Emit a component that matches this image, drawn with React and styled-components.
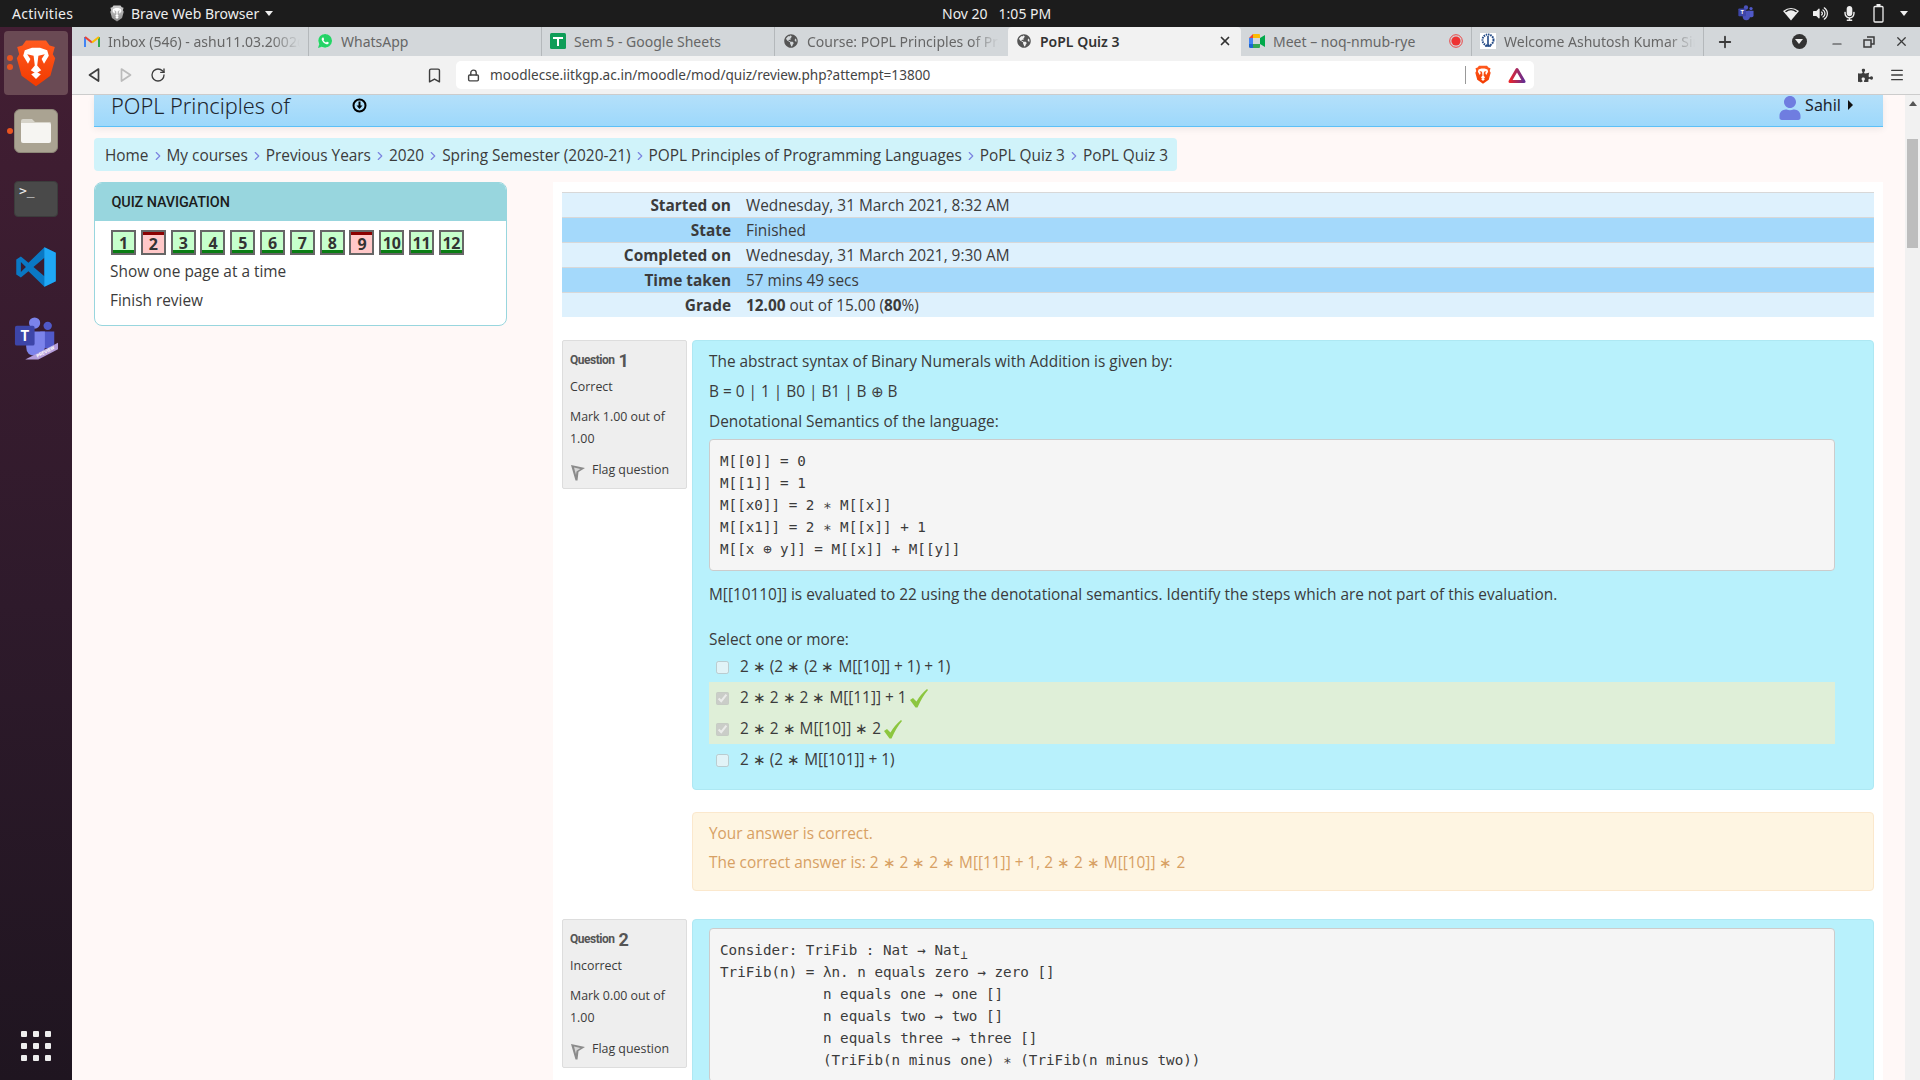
import React from 'react';
import styled, { createGlobalStyle } from 'styled-components';
import { FaGlobeAmericas, FaUser, FaPuzzlePiece, FaVolumeUp, FaMicrophone } from 'react-icons/fa';
import { IoLogoWhatsapp } from 'react-icons/io';
import { Lock, Bookmark, RotateCw, ChevronRight, Plus, X, Minus, Menu } from 'lucide-react';

const Global = createGlobalStyle`
  html, body { margin: 0; padding: 0; height: 100%; overflow: hidden; }
  #root { height: 100%; }
  * { box-sizing: border-box; }
  body { font-family: "Open Sans", "Noto Sans", sans-serif; color: #3b3b3b; }
`;

const Shell = styled.div`
  width: 1920px; height: 1080px; overflow: hidden;
  display: grid; grid-template-columns: 72px 1fr; grid-template-rows: 27px 1fr;
`;

/* ---------- GNOME top bar ---------- */
const TopBar = styled.header`
  grid-column: 1 / -1; background: #1c1c1c; color: #eee;
  display: flex; align-items: center; font: 14px "Noto Sans", sans-serif;
`;
const Activities = styled.span` margin-left: 12px; width: 98px; letter-spacing: .3px; `;
const AppName = styled.span` display: flex; align-items: center; gap: 7px; width: 832px; `;
const TriDown = styled.i`
  display: inline-block; width: 0; height: 0; margin-left: ${p => p.$ml || 0}px;
  border-left: 4px solid transparent; border-right: 4px solid transparent; border-top: 5px solid #eee;
`;
const Clock = styled.span` display: flex; gap: 11px; `;
const Tray = styled.div` margin-left: auto; display: flex; align-items: center; gap: 14px; padding-right: 12px; color: #eee; font-size: 15px; `;
const TraySlot = styled.span` display: flex; margin-left: ${p => p.$ml || 0}px; `;

/* ---------- dock ---------- */
const Dock = styled.nav`
  background: linear-gradient(#431e33, #2e1a2b 55%, #1f1520);
  display: flex; flex-direction: column; align-items: center; padding-top: 4px;
`;
const DockSlot = styled.div`
  position: relative; display: flex; align-items: center; justify-content: center;
  width: ${p => p.$active ? '64px' : '44px'}; height: ${p => p.$h}px; margin-top: ${p => p.$top || 0}px;
  border-radius: 4px; background: ${p => p.$active ? '#6a4a54' : 'transparent'};
`;
const RunDot = styled.i`
  position: absolute; left: ${p => p.$left}px; top: ${p => p.$t}px; width: 6px; height: 6px; border-radius: 50%; background: #e95420;
`;
const FolderTile = styled.div`
  width: 44px; height: 44px; border-radius: 6px; background: #aaa392; border: 1px solid #8d8778;
  display: flex; align-items: center; justify-content: center;
`;
const TermTile = styled.div`
  width: 44px; height: 36px; border-radius: 4px; background: #494949; border: 1px solid #3c3c3c;
  color: #eee; font: 13px/16px "DejaVu Sans Mono", monospace; padding: 1px 4px;
`;
const AppGrid = styled.div`
  margin-top: auto; margin-bottom: 19px; display: grid; grid-template-columns: repeat(3, 6px); gap: 6px;
  & i { width: 6px; height: 6px; border-radius: 1px; background: #eee; display: block; }
`;

/* ---------- browser chrome ---------- */
const Main = styled.div` display: flex; flex-direction: column; min-width: 0; overflow: hidden; `;
const TabBar = styled.div` height: 29px; background: #d3d7da; display: flex; padding-left: 4px; flex: none; `;
const Tab = styled.div`
  width: ${p => p.$w || 233}px; flex: none; height: 29px; display: flex; align-items: center; padding: 0 8px 1px 8px; gap: 8px;
  font: ${p => p.$active ? 600 : 400} 14px "Noto Sans", sans-serif; color: ${p => p.$active ? '#333' : '#666'};
  background: ${p => p.$active ? '#f2f2f2' : 'transparent'};
  border-radius: ${p => p.$active ? '4px 4px 0 0' : 0};
  border-right: 1px solid ${p => p.$noSep ? 'transparent' : '#b4b8bb'};
`;
const TabTitle = styled.span`
  flex: 1; white-space: nowrap; overflow: hidden;
  ${p => p.$fade ? 'mask-image: linear-gradient(90deg,#000 85%,transparent);' : ''}
`;
const IconBox = styled.span` width: 16px; height: 16px; flex: none; display: flex; align-items: center; justify-content: center; `;
const WhatsWrap = styled(IconBox)` background: radial-gradient(circle, #fff 60%, transparent 62%); color: #25d366; font-size: 18px; `;
const WinControls = styled.div` display: flex; align-items: center; margin-left: 12px; color: #3a3a3a; `;
const WinBtn = styled.span` width: 32px; display: flex; justify-content: center; margin-left: ${p => p.$ml || 0}px; `;
const RoundDown = styled.span`
  width: 15px; height: 15px; border-radius: 50%; background: #333; display: flex; align-items: center; justify-content: center;
`;
const Toolbar = styled.div`
  height: 39px; flex: none; background: #f2f2f2; border-bottom: 1px solid #ccc; display: flex; align-items: center; color: #3d3d3d;
`;
const NavBtn = styled.span` width: 32px; display: flex; justify-content: center; color: ${p => p.$off ? '#bbb' : '#3d3d3d'}; margin-left: ${p => p.$ml || 0}px; `;
const Address = styled.div`
  margin-left: 6px; width: 1078px; height: 28px; background: #fff; border-radius: 5px; display: flex; align-items: center; padding-left: 11px;
  font: 13.6px "Noto Sans", sans-serif; color: #444;
`;
const Url = styled.span` margin-left: 10px; flex: 1; padding-bottom: 1px; `;
const UrlSep = styled.i` width: 1px; height: 18px; background: #999; `;
const AddrIcon = styled.span` display: flex; width: 34px; justify-content: center; `;

/* ---------- page ---------- */
const Viewport = styled.div` flex: 1; min-height: 0; display: flex; overflow: hidden; background: #fff8f7; `;
const Content = styled.main` flex: 1; min-width: 0; padding: 0 22px; `;
const Scrollbar = styled.div` width: 15px; flex: none; background: #f1f1f1; padding-top: 6px; display: flex; flex-direction: column; align-items: center; `;
const ScrollUp = styled.i` width: 0; height: 0; border-left: 4px solid transparent; border-right: 4px solid transparent; border-bottom: 5px solid #555; `;
const ScrollThumb = styled.i` display: block; width: 11px; height: 109px; margin-top: 33px; background: #bdbdbd; `;

const SiteHeader = styled.div`
  height: 32px; background: linear-gradient(#b4e0fa, #9dd8fb); border-bottom: 1px solid #5cc0f7;
  box-shadow: 0 2px 7px rgba(0,0,0,.07); display: flex; align-items: center; padding: 0 8px 11px 17px; color: #1d2630; position: relative;
`;
const SiteTitle = styled.span` font: 300 21.7px "Noto Sans", sans-serif; width: 241px; white-space: nowrap; `;
const UserMenu = styled.div` margin-left: auto; display: flex; align-items: center; gap: 3px; font: 16px "Noto Sans", sans-serif; padding-right: 22px; `;
const UserIcon = styled.span` color: #6f7de0; font-size: 24px; display: flex; margin-top: 5px; `;
const CaretRight = styled.i` width: 0; height: 0; margin-left: 4px; border-top: 5px solid transparent; border-bottom: 5px solid transparent; border-left: 5px solid #111; `;

const Crumbs = styled.ol`
  list-style: none; margin: 11px 0 0; padding: 2px 9px 0 11px; height: 33px; display: inline-flex; align-items: center; gap: 2px;
  background: #d0f3fa; border-radius: 4px; font-size: 15.4px; white-space: nowrap; vertical-align: top;
`;
const CrumbItem = styled.li` display: flex; align-items: center; gap: 2px; color: #3b3b3b; & svg { color: #7b83e0; } `;

const Columns = styled.div` display: flex; gap: 46px; margin-top: 11px; align-items: flex-start; `;
const NavCard = styled.aside` width: 413px; flex: none; background: #fff; border: 1px solid #98d6de; border-radius: 8px; overflow: hidden; `;
const NavHead = styled.h2`
  margin: 0; height: 38px; background: #98d6de; padding-left: 16.5px; display: flex; align-items: center;
  font: 500 14.4px Roboto, sans-serif; color: #1c1c1c; letter-spacing: -.1px;
`;
const NavBody = styled.div` padding: 9px 15px 12px; `;
const NavBtns = styled.div` display: flex; gap: 4.8px; margin-left: 1px; `;
const QBtn = styled.span`
  width: 25px; height: 25px; border: 2px solid #666; display: flex; align-items: center; justify-content: center;
  font-weight: 700; font-size: 16px; color: #333; letter-spacing: -.3px; padding-top: ${p => p.$ok ? 0 : 2}px;
  background: ${p => p.$ok ? '#c6ffcc' : '#ffc8c8'};
  box-shadow: inset 0 ${p => p.$ok ? '-3px' : '3px'} 0 ${p => p.$ok ? '#0a7d14' : '#8b0000'};
`;
const NavLink = styled.div` font-size: 15.4px; line-height: 24px; margin-top: ${p => p.$top}px; `;

const Panel = styled.section` flex: 1; min-width: 0; background: #fff; padding: 10px 9px 0; height: 900px; `;
const SumTable = styled.table` width: 100%; border-collapse: collapse; font-size: 15.4px; line-height: 22px; `;
const SumRow = styled.tr` background: ${p => p.$alt ? '#a4d9fb' : '#def1fd'}; border-top: 1px solid #d8d8d8; `;
const SumHead = styled.th` width: 169px; padding: 2px 0 0; text-align: right; font-weight: 700; white-space: nowrap; `;
const SumCell = styled.td` padding: 2px 0 0 15px; `;

const Question = styled.article` display: flex; gap: 5px; margin-top: ${p => p.$top}px; align-items: flex-start; `;
const Info = styled.div` width: 125px; flex: none; background: #eee; border: 1px solid #ddd; border-radius: 2px; padding: 7px 7px 7px; font-size: 12.4px; `;
const QLabel = styled.h3`
  margin: 0; height: 24px; display: flex; align-items: center; gap: 4px; font: 700 12px Roboto, sans-serif; letter-spacing: -.5px; color: #555;
  & b { font-size: 18px; font-weight: 700; letter-spacing: 0; }
`;
const InfoLine = styled.div` line-height: 22px; margin-top: ${p => p.$top}px; `;
const FlagLine = styled.div` display: flex; align-items: flex-start; gap: 7px; line-height: 22px; margin-top: 9px; padding-left: 1px; & svg { margin-top: 5px; } `;
const Body = styled.div` flex: 1; min-width: 0; `;
const Formulation = styled.div` background: #b8f1fc; border-radius: 4px; border: 1px solid #aee8f3; padding: 9px 38px 14px 16px; font-size: 15.4px; line-height: 24px; `;
const Para = styled.p` margin: ${p => p.$top || 0}px 0 0; `;
const Code = styled.pre`
  margin: ${p => p.$top ?? 5}px 0 0; background: #f5f5f5; border: 1px solid #ccc; border-radius: 4px; padding: 10px;
  font: 14.25px/22px "DejaVu Sans Mono", monospace; color: #3b3b3b; overflow: hidden;
  & sub { font-size: 12px; line-height: 0; }
`;
const Options = styled.div` margin-top: -1px; `;
const Option = styled.label`
  display: flex; align-items: center; height: 31px; padding-left: 7px; gap: 11px;
  background: ${p => p.$right ? '#dfefd8' : 'transparent'};
  & input { margin: 2px 0 0; width: 13px; height: 13px; flex: none; }
`;
const Feedback = styled.div`
  margin-top: 22px; background: #fef5e2; border: 1px solid #fbe8cd; border-radius: 4px; padding: 9px 16px 15px; color: #d7a064; font-size: 15.4px; line-height: 24px;
`;
const Tick = styled.svg` margin: 0 0 -5px 3px; `;

const TickMark = () => (
  <Tick width="18" height="19" viewBox="0 0 18 19"><path fill="#8cc63f" d="M0 11L3 9L6.5 12.5Q10 6 17 0L18 1Q12 8 7.5 18.5L5.5 18.5Z" /></Tick>
);
const Shield = ({ size = 40, mono }) => (
  <svg width={size} height={size * 1.2} viewBox="0 0 100 120">
    <defs><linearGradient id={mono ? 'sm' : 'sc'} x1="0" y1="0" x2="0" y2="1">
      <stop offset="0" stopColor={mono ? '#cfcfcf' : '#ff5a1f'} /><stop offset="1" stopColor={mono ? '#8a8a8a' : '#f23a00'} />
    </linearGradient></defs>
    <path fill={`url(#${mono ? 'sm' : 'sc'})`} d="M25 4H75L84 16L97 20L92 38L98 48L86 92L50 118L14 92L2 48L8 38L3 20L16 16Z" />
    <path fill="#fff" d="M22 28L40 22H60L78 28L82 42L70 62L64 50L72 38L56 42L53 66L63 78L50 86L37 78L47 66L44 42L28 38L36 50L30 62L18 42Z" />
    <path fill="#fff" d="M38 88L50 82L62 88L50 100Z" />
  </svg>
);
const Gmail = () => (
  <svg width="16" height="13" viewBox="0 0 16 13" fill="none">
    <path d="M1 12V2" stroke="#4285f4" strokeWidth="2" /><path d="M15 12V2" stroke="#34a853" strokeWidth="2" />
    <path d="M1 2L8 7.5" stroke="#ea4335" strokeWidth="2.2" /><path d="M15 2L8 7.5" stroke="#fbbc04" strokeWidth="2.2" />
  </svg>
);
const Sheets = () => (
  <svg width="16" height="16" viewBox="0 0 16 16"><rect width="16" height="16" rx="1.5" fill="#0f9d58" /><path d="M3 5H13M8 5V13" stroke="#fff" strokeWidth="2" /></svg>
);
const MeetIcon = () => (
  <svg width="16" height="14" viewBox="0 0 16 14">
    <path d="M0 4L4 0V4Z" fill="#ea4335" /><rect x="0" y="4" width="4" height="6" fill="#4285f4" /><path d="M0 10H4V14H1.5Q0 14 0 12.5Z" fill="#1967d2" />
    <path d="M4 0H10Q11 0 11 1V4H4Z" fill="#fbbc04" /><path d="M4 10H11V13Q11 14 10 14H4Z" fill="#34a853" /><path d="M11 4V10L16 13V1Z" fill="#00a94b" />
  </svg>
);
const RecDot = () => (
  <svg width="14" height="14" viewBox="0 0 14 14" style={{ flex: 'none' }}><circle cx="7" cy="7" r="6.3" fill="none" stroke="#e33" strokeWidth=".9" /><circle cx="7" cy="7" r="4.6" fill="#e33" /></svg>
);
const IitLogo = () => (
  <svg width="16" height="16" viewBox="0 0 16 16"><rect width="16" height="16" fill="#fff" /><circle cx="8" cy="7" r="5.5" fill="none" stroke="#234a86" strokeWidth="2" strokeDasharray="1.5 .8" /><path d="M8 3V13M5 13H11" stroke="#234a86" strokeWidth="1.6" /></svg>
);
const Tri = ({ flip, color = '#3d3d3d' }) => (
  <svg width="14" height="16" viewBox="0 0 14 16" fill="none" style={{ transform: flip ? 'scaleX(-1)' : 'none' }}><path d="M11.5 2L2.5 8L11.5 14Z" stroke={color} strokeWidth="1.7" strokeLinejoin="round" /></svg>
);
const WifiFan = () => (
  <svg width="16" height="14" viewBox="0 0 16 14"><path fill="#eee" d="M8 13.5L0 4Q8 -2 16 4Z" /><path fill="#1c1c1c" d="M2 4.2Q8 0 14 4.2L13 5.2Q8 1.4 3 5.2Z" /></svg>
);
const BatIcon = () => <svg width="11" height="19" viewBox="0 0 11 19" fill="none"><path d="M3.5 1H7.5" stroke="#eee" strokeWidth="2" /><rect x="1" y="2.5" width="9" height="15.5" rx="1" stroke="#eee" strokeWidth="1.3" /></svg>;
const VsCode = () => (
  <svg width="42" height="42" viewBox="0 0 100 100">
    <path fillRule="evenodd" fill="#0a78c4" d="M70 3L97 16V84L70 97L32 60L14 75L3 68V32L14 25L32 40ZM70 28L44 50L70 72ZM14 38V62L26 50Z" />
    <path fill="#1fa7f5" d="M70 3L97 16V84L70 97V72L70 28Z" />
  </svg>
);
const Teams = ({ small }) => (
  <svg width={small ? 17 : 47} height={small ? 17 : 45} viewBox="0 0 47 45">
    <circle cx="22" cy="6" r="6" fill={small ? '#4b53bc' : '#7b83eb'} /><circle cx="36" cy="9" r="4.5" fill="#5059c9" />
    <path d="M28 15H43V28Q43 33 38 33H28Z" fill="#5059c9" /><path d="M13 15H33V31Q33 41 23 41T13 31Z" fill={small ? '#4b53bc' : '#7b83eb'} />
    <rect x="1" y="9" width="21" height="21" rx="2" fill="#3d45a8" />
    <text x="11.5" y="25" textAnchor="middle" fontFamily="Roboto, sans-serif" fontWeight="700" fontSize="15" fill="#fff">T</text>
    {!small && <path d="M12 45L47 27V34L26 45Z" fill="#b39ddb" />}
    {!small && <text x="25" y="43" transform="rotate(-27 25 43)" fontFamily="Roboto, sans-serif" fontWeight="700" fontSize="5" fill="#fff">PREVIEW</text>}
  </svg>
);
const DownloadRing = () => (
  <svg width="15" height="15" viewBox="0 0 15 15" fill="none"><circle cx="7.5" cy="7.5" r="6" stroke="#000" strokeWidth="2" /><path d="M7.5 3.5V8" stroke="#000" strokeWidth="2" /><path d="M4.5 7.5H10.5L7.5 11Z" fill="#000" /></svg>
);
const FlagIcon = () => (
  <svg width="14" height="17" viewBox="0 0 14 17" style={{ flex: 'none' }}><path d="M0 1L14 4L7.5 8L6.5 16.5L4.5 16.5Z" fill="#8b8b8b" /><path d="M3 3.5L9.5 5L5.5 7.5L5 11Z" fill="#d5d5d5" /></svg>
);
const BatTriangle = () => (
  <svg width="18" height="16" viewBox="0 0 18 16" fill="none"><path d="M9 2.5L16 14.5H2Z" stroke="url(#bat)" strokeWidth="3" strokeLinejoin="round" />
    <defs><linearGradient id="bat" x1="0" y1="0" x2="1" y2="0"><stop offset="0" stopColor="#e8262d" /><stop offset="1" stopColor="#662d91" /></linearGradient></defs></svg>
);

const OPTIONS = [
  { text: '2 ∗ (2 ∗ (2 ∗ M[[10]] + 1) + 1)' },
  { text: '2 ∗ 2 ∗ 2 ∗ M[[11]] + 1', right: true },
  { text: '2 ∗ 2 ∗ M[[10]] ∗ 2', right: true },
  { text: '2 ∗ (2 ∗ M[[101]] + 1)' },
];
const CRUMBS = ['Home', 'My courses', 'Previous Years', '2020', 'Spring Semester (2020-21)', 'POPL Principles of Programming Languages', 'PoPL Quiz 3', 'PoPL Quiz 3'];
const SUMMARY = [
  ['Started on', 'Wednesday, 31 March 2021, 8:32 AM'],
  ['State', 'Finished'],
  ['Completed on', 'Wednesday, 31 March 2021, 9:30 AM'],
  ['Time taken', '57 mins 49 secs'],
  ['Grade', <><b>12.00</b> out of 15.00 (<b>80</b>%)</>],
];

const QInfo = ({ n, status, mark }) => (
  <Info>
    <QLabel>Question <b>{n}</b></QLabel>
    <InfoLine $top={4}>{status}</InfoLine>
    <InfoLine $top={8}>Mark {mark} out of 1.00</InfoLine>
    <FlagLine><FlagIcon />Flag question</FlagLine>
  </Info>
);

export default function App() {
  return (
    <>
      <Global />
      <Shell>
        <TopBar>
          <Activities>Activities</Activities>
          <AppName><Shield size={14} mono />Brave Web Browser<TriDown $ml={-1} /></AppName>
          <Clock><span>Nov 20</span><span>1:05 PM</span></Clock>
          <Tray>
            <Teams small />
            <TraySlot $ml={14}><WifiFan /></TraySlot>
            <TraySlot><FaVolumeUp size={15} /></TraySlot>
            <TraySlot><FaMicrophone size={15} /></TraySlot>
            <TraySlot $ml={2}><BatIcon /></TraySlot>
            <TraySlot $ml={2}><TriDown /></TraySlot>
          </Tray>
        </TopBar>
        <Dock>
          <DockSlot $active $h={64}>
            <RunDot $left={3} $t={24} /><RunDot $left={3} $t={33} />
            <Shield size={40} />
          </DockSlot>
          <DockSlot $h={44} $top={14}>
            <RunDot $left={-7} $t={19} />
            <FolderTile>
              <svg width="32" height="26" viewBox="0 0 32 26"><path d="M1 3Q1 1 3 1H12L15 4H30Q31 4 31 6V8H1Z" fill="#d6d3c9" /><path d="M1 5H29Q31 5 31 7V23Q31 25 29 25H3Q1 25 1 23Z" fill="#f6f5f2" /></svg>
            </FolderTile>
          </DockSlot>
          <DockSlot $h={36} $top={28}><TermTile>&gt;_</TermTile></DockSlot>
          <DockSlot $h={42} $top={29}><VsCode /></DockSlot>
          <DockSlot $h={45} $top={28}><Teams /></DockSlot>
          <AppGrid>{Array.from({ length: 9 }, (_, i) => <i key={i} />)}</AppGrid>
        </Dock>
        <Main>
          <TabBar>
            <Tab><IconBox><Gmail /></IconBox><TabTitle $fade>Inbox (546) - ashu11.03.2002@gmail.com</TabTitle></Tab>
            <Tab><WhatsWrap><IoLogoWhatsapp /></WhatsWrap><TabTitle>WhatsApp</TabTitle></Tab>
            <Tab><IconBox><Sheets /></IconBox><TabTitle>Sem 5 - Google Sheets</TabTitle></Tab>
            <Tab $noSep><IconBox><FaGlobeAmericas size={14} color="#555" /></IconBox><TabTitle $fade>Course: POPL Principles of Programming</TabTitle></Tab>
            <Tab $active $noSep><IconBox><FaGlobeAmericas size={14} color="#555" /></IconBox><TabTitle>PoPL Quiz 3</TabTitle><X size={14} strokeWidth={3} color="#333" /></Tab>
            <Tab $w={231}><IconBox><MeetIcon /></IconBox><TabTitle>Meet – noq-nmub-rye</TabTitle><RecDot /></Tab>
            <Tab $w={232}><IconBox><IitLogo /></IconBox><TabTitle $fade>Welcome Ashutosh Kumar Singh</TabTitle></Tab>
            <WinControls>
              <Plus size={18} strokeWidth={2.4} />
              <WinBtn $ml={49}><RoundDown><TriDown /></RoundDown></WinBtn>
              <WinBtn $ml={6}><Minus size={14} strokeWidth={2} style={{ marginTop: 5 }} /></WinBtn>
              <WinBtn><svg width="12" height="12" viewBox="0 0 12 12" fill="none" stroke="#3a3a3a" strokeWidth="1.5"><path d="M4 1H11V8H8M1 4H8V11H1Z" /></svg></WinBtn>
              <WinBtn><X size={15} strokeWidth={2} /></WinBtn>
            </WinControls>
          </TabBar>
          <Toolbar>
            <NavBtn $ml={6}><Tri /></NavBtn>
            <NavBtn $off><Tri flip color="#bbb" /></NavBtn>
            <NavBtn><RotateCw size={16} strokeWidth={2} /></NavBtn>
            <NavBtn $ml={244}><Bookmark size={17} strokeWidth={2} /></NavBtn>
            <Address>
              <Lock size={13} strokeWidth={2.6} color="#444" />
              <Url>moodlecse.iitkgp.ac.in/moodle/mod/quiz/review.php?attempt=13800</Url>
              <UrlSep />
              <AddrIcon><Shield size={16} /></AddrIcon>
              <AddrIcon><BatTriangle /></AddrIcon>
            </Address>
            <NavBtn $ml={315}><FaPuzzlePiece size={15} /></NavBtn>
            <NavBtn $ml={0}><Menu size={16} strokeWidth={2} /></NavBtn>
          </Toolbar>
          <Viewport>
            <Content>
              <SiteHeader>
                <SiteTitle>POPL Principles of</SiteTitle>
                <DownloadRing />
                <UserMenu><UserIcon><FaUser /></UserIcon>Sahil<CaretRight /></UserMenu>
              </SiteHeader>
              <Crumbs>
                {CRUMBS.map((c, i) => (
                  <CrumbItem key={i}>{c}{i < CRUMBS.length - 1 && <ChevronRight size={14} strokeWidth={2} />}</CrumbItem>
                ))}
              </Crumbs>
              <Columns>
                <NavCard>
                  <NavHead>QUIZ NAVIGATION</NavHead>
                  <NavBody>
                    <NavBtns>
                      {[1, 2, 3, 4, 5, 6, 7, 8, 9, 10, 11, 12].map(n => <QBtn key={n} $ok={n !== 2 && n !== 9}>{n}</QBtn>)}
                    </NavBtns>
                    <NavLink $top={5}>Show one page at a time</NavLink>
                    <NavLink $top={5}>Finish review</NavLink>
                  </NavBody>
                </NavCard>
                <Panel>
                  <SumTable>
                    <tbody>
                      {SUMMARY.map(([k, v], i) => (
                        <SumRow key={k} $alt={i % 2 === 1}><SumHead>{k}</SumHead><SumCell>{v}</SumCell></SumRow>
                      ))}
                    </tbody>
                  </SumTable>
                  <Question $top={23}>
                    <QInfo n={1} status="Correct" mark="1.00" />
                    <Body>
                      <Formulation>
                        <Para>The abstract syntax of Binary Numerals with Addition is given by:</Para>
                        <Para $top={6}>B = 0 | 1 | B0 | B1 | B ⊕ B</Para>
                        <Para $top={6}>Denotational Semantics of the language:</Para>
                        <Code>{`M[[0]] = 0
M[[1]] = 1
M[[x0]] = 2 ∗ M[[x]]
M[[x1]] = 2 ∗ M[[x]] + 1
M[[x ⊕ y]] = M[[x]] + M[[y]]`}</Code>
                        <Para $top={12}>M[[10110]] is evaluated to 22 using the denotational semantics. Identify the steps which are not part of this evaluation.</Para>
                        <Para $top={21}>Select one or more:</Para>
                        <Options>
                          {OPTIONS.map(o => (
                            <Option key={o.text} $right={o.right}>
                              <input type="checkbox" disabled checked={!!o.right} readOnly />
                              <span>{o.text}{o.right && <TickMark />}</span>
                            </Option>
                          ))}
                        </Options>
                      </Formulation>
                      <Feedback>
                        <Para>Your answer is correct.</Para>
                        <Para $top={5}>The correct answer is: 2 ∗ 2 ∗ 2 ∗ M[[11]] + 1, 2 ∗ 2 ∗ M[[10]] ∗ 2</Para>
                      </Feedback>
                    </Body>
                  </Question>
                  <Question $top={28}>
                    <QInfo n={2} status="Incorrect" mark="0.00" />
                    <Body>
                      <Formulation>
                        <Code $top={-1}>{`Consider: TriFib : Nat → Nat`}<sub>⊥</sub>{`
TriFib(n) = λn. n equals zero → zero []
            n equals one → one []
            n equals two → two []
            n equals three → three []
            (TriFib(n minus one) ∗ (TriFib(n minus two))`}</Code>
                      </Formulation>
                    </Body>
                  </Question>
                </Panel>
              </Columns>
            </Content>
            <Scrollbar><ScrollUp /><ScrollThumb /></Scrollbar>
          </Viewport>
        </Main>
      </Shell>
    </>
  );
}
